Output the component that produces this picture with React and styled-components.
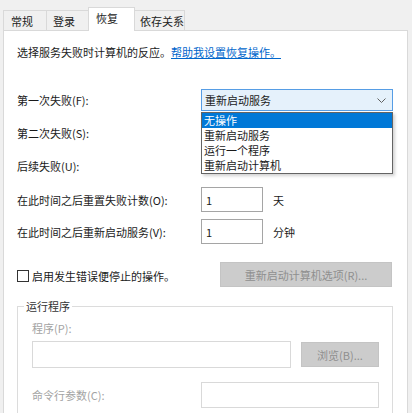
import React from "react";
import styled, { createGlobalStyle } from "styled-components";

const Global = createGlobalStyle`
  html, body { margin: 0; padding: 0; background: #f0f0f0; }
  body { font-family: "Noto Sans CJK SC", "Noto Sans", sans-serif; font-size: 11px; color: #1a1a1a; }
  * { box-sizing: border-box; }
`;

const Window = styled.div`
  width: 412px;
  height: 413px;
  overflow: hidden;
  background: #f0f0f0;
`;

const TabStrip = styled.div`
  display: flex;
  align-items: flex-end;
  height: 30px;
  padding-left: 3px;
`;

const Tab = styled.div`
  position: relative;
  width: ${(p) => p.$w}px;
  height: ${(p) => (p.$active ? 24 : 20)}px;
  margin-bottom: ${(p) => (p.$active ? -1 : 0)}px;
  padding-left: ${(p) => p.$pl}px;
  display: flex;
  align-items: center;
  padding-bottom: ${(p) => (p.$active ? 4 : 0)}px;
  background: ${(p) => (p.$active ? "#ffffff" : "#f0f0f0")};
  border: 1px solid #d9d9d9;
  border-bottom: none;
  margin-left: ${(p) => (p.$first ? 0 : -1)}px;
  z-index: ${(p) => (p.$active ? 2 : 1)};
  line-height: 16px;
  color: #222;
`;

const Panel = styled.div`
  margin-left: 3px;
  width: 405px;
  height: 400px;
  background: #ffffff;
  border: 1px solid #d9d9d9;
  border-bottom: none;
  padding: 13px 14px 0 13px;
`;

const Intro = styled.div`
  line-height: 16px;
  white-space: nowrap;
`;

const Link = styled.a`
  color: #0066cc;
  text-decoration: underline;
  cursor: pointer;
`;

const Row = styled.div`
  display: flex;
  align-items: center;
  height: ${(p) => p.$h}px;
  margin-top: ${(p) => p.$mt}px;
`;

const Label = styled.div`
  width: ${(p) => p.$w || 184}px;
  flex: none;
  line-height: 16px;
  white-space: nowrap;
  color: ${(p) => (p.$disabled ? "#a3a3a3" : "#1a1a1a")};
`;

const ComboWrap = styled.div`
  position: relative;
  width: 192px;
  height: 22px;
`;

const Combo = styled.div`
  width: 100%;
  height: 100%;
  display: flex;
  align-items: center;
  justify-content: space-between;
  padding: 0 6px 0 3px;
  background: #e5f1fb;
  border: 1px solid #569de5;
  line-height: 16px;
`;

const DropList = styled.ul`
  position: absolute;
  left: 0;
  top: 23px;
  width: 192px;
  margin: 0;
  padding: 0;
  list-style: none;
  background: #ffffff;
  border: 1px solid #646464;
  box-shadow: 2px 2px 3px rgba(0, 0, 0, 0.18);
  z-index: 5;
`;

const DropItem = styled.li`
  height: 15px;
  line-height: 15px;
  padding-left: 2px;
  background: ${(p) => (p.$sel ? "#0078d7" : "transparent")};
  color: ${(p) => (p.$sel ? "#ffffff" : "#1a1a1a")};
`;

const NumInput = styled.div`
  width: 62px;
  height: 25px;
  border: 1px solid #a5a5a5;
  padding-left: 4px;
  display: flex;
  align-items: center;
  line-height: 16px;
`;

const Unit = styled.span`
  margin-left: 10px;
  line-height: 16px;
`;

const CheckRow = styled.div`
  display: flex;
  align-items: center;
  justify-content: space-between;
  height: 25px;
  margin-top: 18px;
`;

const CheckLabel = styled.label`
  display: flex;
  align-items: center;
  gap: 3px;
  line-height: 16px;
  margin-top: 3px;
`;

const Box = styled.span`
  width: 12px;
  height: 12px;
  border: 1px solid #333333;
  background: #ffffff;
`;

const DisabledButton = styled.div`
  width: ${(p) => p.$w}px;
  height: 25px;
  margin-right: ${(p) => p.$mr || 0}px;
  display: flex;
  align-items: center;
  justify-content: center;
  background: #cccccc;
  border: 1px solid #c4c4c4;
  color: #8f8f8f;
  line-height: 16px;
`;

const Group = styled.fieldset`
  margin: 11px 0 0 0;
  padding: 6px 13px 0 14px;
  border: 1px solid #dcdcdc;
  height: 140px;
  min-width: 0;
`;

const Legend = styled.legend`
  margin-left: -8px;
  padding: 0 2px;
  line-height: 16px;
  color: #333333;
`;

const FieldBox = styled.div`
  width: ${(p) => p.$w}px;
  height: ${(p) => p.$h}px;
  border: 1px solid #d9d9d9;
  background: #ffffff;
`;

const ProgRow = styled.div`
  display: flex;
  align-items: center;
  gap: 10px;
  margin-top: 5px;
`;

const Chevron = () => (
  <svg width="9" height="5" viewBox="0 0 9 5">
    <path d="M0.5 0.5 L4.5 4.5 L8.5 0.5" fill="none" stroke="#606060" strokeWidth="1" />
  </svg>
);

export default function App() {
  return (
    <Window>
      <Global />
      <TabStrip>
        <Tab $first $w={44} $pl={7}>常规</Tab>
        <Tab $w={43} $pl={6}>登录</Tab>
        <Tab $active $w={47} $pl={7}>恢复</Tab>
        <Tab $w={51} $pl={5}>依存关系</Tab>
      </TabStrip>
      <Panel>
        <Intro>
          选择服务失败时计算机的反应。<Link>帮助我设置恢复操作。</Link>
        </Intro>
        <Row $h={22} $mt={29}>
          <Label>第一次失败(F):</Label>
          <ComboWrap>
            <Combo>
              <span>重新启动服务</span>
              <Chevron />
            </Combo>
            <DropList>
              <DropItem $sel>无操作</DropItem>
              <DropItem>重新启动服务</DropItem>
              <DropItem>运行一个程序</DropItem>
              <DropItem>重新启动计算机</DropItem>
            </DropList>
          </ComboWrap>
        </Row>
        <Row $h={22} $mt={11}>
          <Label>第二次失败(S):</Label>
        </Row>
        <Row $h={22} $mt={11}>
          <Label>后续失败(U):</Label>
        </Row>
        <Row $h={25} $mt={10}>
          <Label>在此时间之后重置失败计数(O):</Label>
          <NumInput>1</NumInput>
          <Unit>天</Unit>
        </Row>
        <Row $h={25} $mt={7}>
          <Label>在此时间之后重新启动服务(V):</Label>
          <NumInput>1</NumInput>
          <Unit>分钟</Unit>
        </Row>
        <CheckRow>
          <CheckLabel>
            <Box />
            启用发生错误便停止的操作。
          </CheckLabel>
          <DisabledButton $w={172} $mr={1}>重新启动计算机选项(R)...</DisabledButton>
        </CheckRow>
        <Group>
          <Legend>运行程序</Legend>
          <Label $disabled>程序(P):</Label>
          <ProgRow>
            <FieldBox $w={259} $h={27} />
            <DisabledButton $w={78}>浏览(B)...</DisabledButton>
          </ProgRow>
          <Row $h={26} $mt={14}>
            <Label $disabled $w={169}>命令行参数(C):</Label>
            <FieldBox $w={178} $h={26} />
          </Row>
        </Group>
      </Panel>
    </Window>
  );
}
